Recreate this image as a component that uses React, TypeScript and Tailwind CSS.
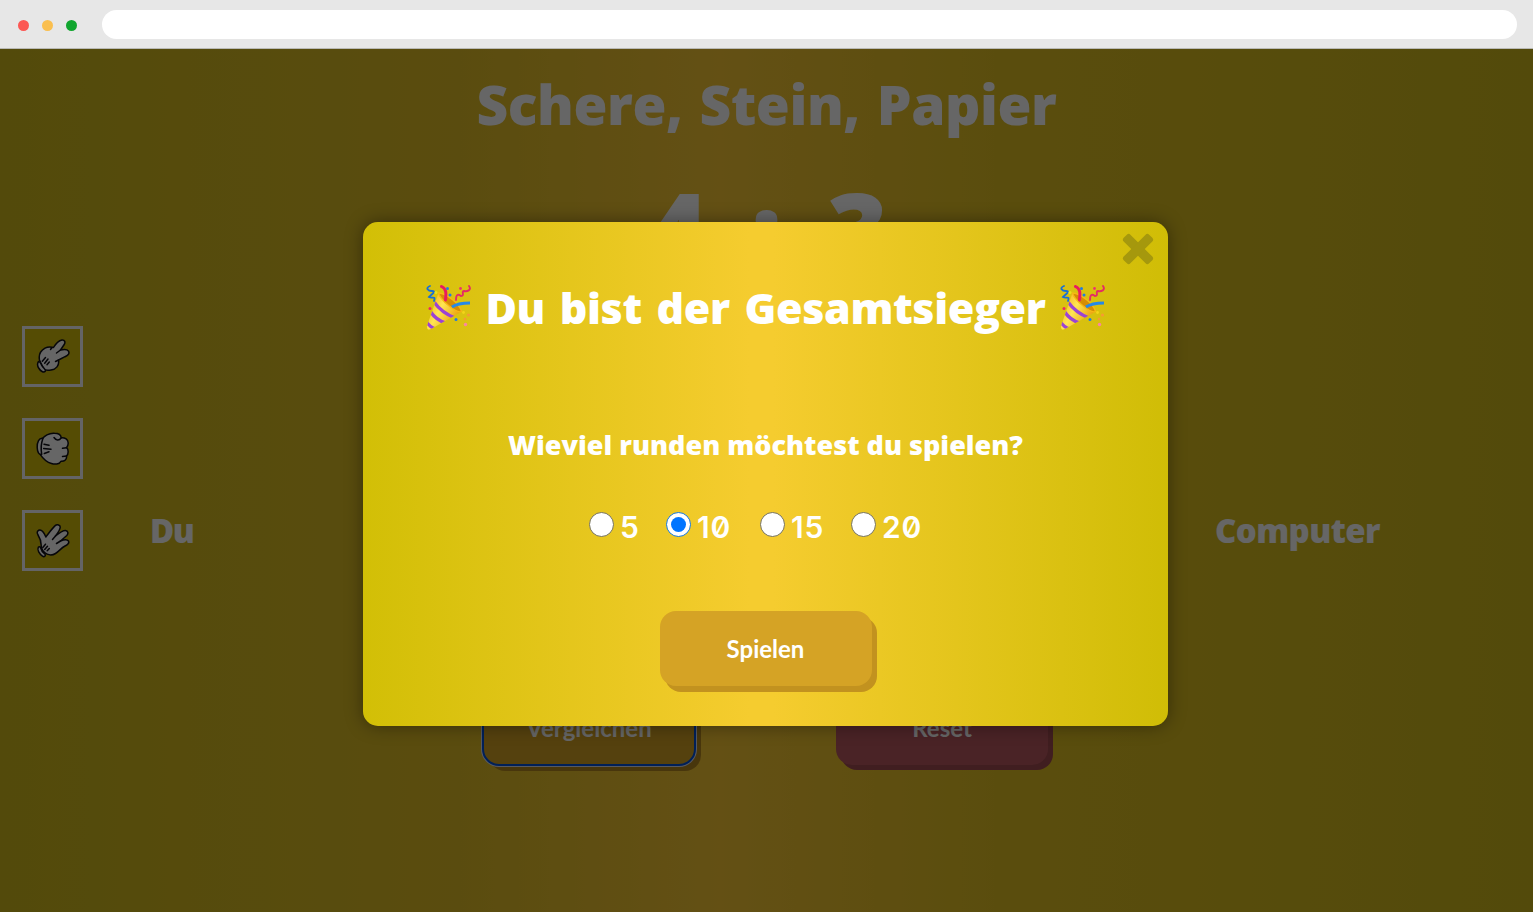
import { useState } from "react";

const heading = "font-['Open_Sans',sans-serif] font-extrabold text-white whitespace-nowrap";
const buttonText = "font-['Lato','Open_Sans',sans-serif] font-bold text-white whitespace-nowrap";

function Scissors() {
  return (
    <svg viewBox="0 0 34 34" className="size-[34px]" fill="#fff" stroke="#101018" strokeWidth="1.5" strokeLinejoin="round" strokeLinecap="round">
      <path d="M3.500 21C2.500 16 5 11.500 9 9.200C12 7.500 15 7.800 17.500 8.500C19.500 5 23 1.500 26 .900C29 .700 29.500 3.500 28.200 5.500L24.500 11C27.500 10.300 31 9.800 32.500 12.200C34 15 31.500 16.500 29 17.700L22.500 21C23.500 26.500 20 30.500 15 31C11 31.500 8.500 31 7.500 30Z" />
      <path d="M2.500 22.500C1.200 24.500 1.200 27 3 29.500C4.500 32 7.500 34 9.300 32.300C10 30.500 7.800 29.300 6.200 27C4.800 25 4.700 22.800 2.500 22.500Z" />
      <path d="M6.300 22.300L9.500 18.500M8.700 24.200L12 20M11 25.700L13.300 23M24.500 11L20.500 14M16 8.500L14.500 10.500M19.500 22.500L22.500 21" fill="none" />
    </svg>
  );
}

function Rock() {
  return (
    <svg viewBox="0 0 34 34" className="size-[34px]" fill="#fff" stroke="#101018" strokeWidth="1.5" strokeLinejoin="round" strokeLinecap="round">
      <path d="M5.500 7.500C9 3 13.500 .900 18.500 1.200C22.500 1.200 25 3.200 25.300 5.800C29 5.500 32.200 7.500 32.200 11C32.300 13 31.500 14.500 30.500 15.700C32.700 17.200 32.700 22 30.500 24C31.200 28.500 27.500 29.500 25 29.200C23.500 32.500 18.500 32.500 15.500 31.500C10.500 30 7 26.500 4.500 22.800Z" />
      <path d="M7 6.300C3 5.300 1 10.500 1.200 15.500C1.400 20 2.800 23 5.700 22.500C4.700 17 5 11.500 7 6.300Z" />
      <path d="M8 12.200L13 13.300M7.700 16.500L15 17.200M8.300 21.500L13 19.700M18 5.500C20 8.500 23 9 25.300 5.800M26.500 16.300L30.500 15.700M26.500 24.500L30.500 24" fill="none" />
    </svg>
  );
}

function Paper() {
  return (
    <svg viewBox="0 0 34 34" className="size-[34px]" fill="#fff" stroke="#101018" strokeWidth="1.500" strokeLinejoin="round" strokeLinecap="round">
      <path d="M5.200 22.500C5.500 17.500 4 14 1.800 10.500C.200 7.500 2.500 5.500 4.800 6.200C7.500 7 8.500 10 9.800 13C12.500 9.500 16 4.500 19.200 1.600C21 0 24.500 .800 24.200 3.500C24 6 21 10 19.500 12C22.500 9.500 26.500 6.200 29.500 6.400C32 6.800 32.700 9.500 30.800 11.500L24.500 17C27.500 15.800 31 15 32.500 17C33.500 19 31 21 29 22C25 24 23.500 27 19.500 29.500C14.500 32.500 7 30.500 5.200 22.500Z" />
      <path d="M2.300 23.300C.700 26 3.500 30 6.500 32.200C8.300 33.300 9.700 32 9.200 30.500C7.200 29 5 25.500 4.500 23.500C4 22.500 2.800 22.700 2.300 23.300Z" />
      <path d="M6.800 23.500L9.500 20.200M8.700 25.500L11.500 22.300M11.200 26.800L13.300 24.500M19.500 12L16.500 15.500M24.500 17L20.500 19.500" fill="none" />
    </svg>
  );
}

function PartyPopper() {
  return (
    <svg viewBox="0 0 45 45" className="size-[45px] shrink-0" fill="none" strokeLinecap="round">
      <defs>
        <linearGradient id="cone" x1="0" y1="0" x2="1" y2="0.6">
          <stop offset="0" stopColor="#f29b08" />
          <stop offset="0.48" stopColor="#ffe653" />
          <stop offset="1" stopColor="#e99b08" />
        </linearGradient>
        <clipPath id="coneClip">
          <path d="M12.500 8L1 41C.500 44 2.500 45.200 5 44L35 27C29 18 21 10 12.500 8Z" />
        </clipPath>
      </defs>
      <path d="M12.500 8L1 41C.500 44 2.500 45.200 5 44L35 27C29 18 21 10 12.500 8Z" fill="url(#cone)" />
      <g clipPath="url(#coneClip)" stroke="#9b43d4" strokeWidth="3.300">
        <path d="M8 17C13 24 19 29 29 33" />
        <path d="M4 26C8 32 12 36 20 38" />
        <path d="M0 36C3 41 6 43 10 44" />
      </g>
      <path d="M12.500 8C21 8 34 20 35.500 26.500C31 29 14 15 12.500 8Z" fill="#d68d04" stroke="#f6b716" strokeWidth="1.300" />
      <path d="M15.500 1.500C21 4 20 9 19.500 15" stroke="#e91b60" strokeWidth="3" />
      <path d="M26 22C31 18.500 37 18 44 18" stroke="#2589e8" strokeWidth="3" strokeLinecap="butt" />
      <path d="M4 1C-1 3 2 6 6 6C11 6 5 10 3 12C6 14 10 10 8 16" stroke="#176fd5" strokeWidth="1.800" />
      <path d="M43 1C46 5 41 7 38 6C35 6 39 11 35 11C32 9 30 9 30 15" stroke="#e52b65" strokeWidth="1.900" />
      <circle cx="21.500" cy="3.500" r="1.500" fill="#217be4" />
      <circle cx="34.500" cy="3.500" r="1.400" fill="#ed3470" />
      <circle cx="24" cy="10" r="1.500" fill="#217be4" />
      <circle cx="10" cy="7.500" r="1.500" fill="#e9e319" />
      <circle cx="4" cy="23.500" r="1.500" fill="#ef2664" />
      <circle cx="30" cy="34.500" r="1.500" fill="#217be4" />
      <circle cx="37.500" cy="27.500" r="1.400" fill="#f3d419" />
      <circle cx="42.500" cy="30" r="1.600" fill="#f79b33" />
      <circle cx="39" cy="34" r="1.300" fill="#f79b33" />
      <circle cx="39.500" cy="39.500" r="1.700" fill="#fa87a0" />
    </svg>
  );
}

function BrowserBar() {
  return (
    <header className="flex h-[49px] items-center border-b border-[#b9b9b5] bg-[#e7e7e7] pl-[18px] pr-4">
      <div className="flex gap-[13px] pt-[2px]">
        <i className="size-[11px] rounded-full bg-[#fc5753]" />
        <i className="size-[11px] rounded-full bg-[#fabf4f]" />
        <i className="size-[11px] rounded-full bg-[#11a62f]" />
      </div>
      <div className="ml-[25px] h-[29px] flex-1 rounded-full bg-white" />
    </header>
  );
}

const rounds = [
  { value: 5, width: "w-[77px]" },
  { value: 10, width: "w-[94px]" },
  { value: 15, width: "w-[91px]" },
  { value: 20, width: "w-[71px]" },
];

function WinnerDialog() {
  const [selected, setSelected] = useState(10);
  return (
    <section role="dialog" className="relative mt-[173px] flex h-[504px] w-[805px] -translate-x-px flex-col items-center rounded-[15px] bg-[linear-gradient(90deg,#d2bf06,#f5cc2f_48%,#f5cc2f_51%,#d0bd06)] shadow-[0_0_18px_rgba(0,0,0,0.4)]">
      <button aria-label="Schließen" className="absolute right-[14px] top-[11px] size-8">
        <svg viewBox="-16 -16 32 32" className="size-8" fill="#a5980d">
          <rect x="-18" y="-4.750" width="36" height="9.500" rx="2.500" transform="rotate(45)" />
          <rect x="-18" y="-4.750" width="36" height="9.500" rx="2.500" transform="rotate(-45)" />
        </svg>
      </button>
      <div className="mt-[56px] flex h-[58px] w-[680px] items-center justify-between">
        <PartyPopper />
        <h2 className={`${heading} pt-[2px] text-[43px] leading-[58px] tracking-[-0.4px] [word-spacing:4px]`}>Du bist der Gesamtsieger</h2>
        <PartyPopper />
      </div>
      <p className={`${heading} mt-[89px] text-[27px] leading-[40px]`}>Wieviel runden möchtest du spielen?</p>
      <div className="mt-[41px] flex h-10 w-[353px]">
        {rounds.map((round) => (
          <label key={round.value} className={`${round.width} flex shrink-0 items-center gap-[6px]`}>
            <input type="radio" name="rounds" className="sr-only" checked={selected === round.value} onChange={() => setSelected(round.value)} />
            <span className={`mb-[3px] flex size-[25px] shrink-0 items-center justify-center rounded-full border bg-white ${selected === round.value ? "border-[#1678d8]" : "border-[#77735b]"}`}>
              {selected === round.value && <i className="size-[15px] rounded-full bg-[#0075ff]" />}
            </span>
            <span className="pt-px font-['Inter',sans-serif] text-[30px] font-semibold leading-10 tracking-[0.8px] text-white slashed-zero">{round.value}</span>
          </label>
        ))}
      </div>
      <button className={`${buttonText} mt-[65px] h-[75px] w-[212px] rounded-[16px] bg-[#d5a325] text-[24px] shadow-[5px_6px_0_#c2921f]`}>Spielen</button>
    </section>
  );
}

export default function App() {
  return (
    <div className="flex h-[912px] w-full flex-col overflow-hidden">
      <BrowserBar />
      <div className="relative flex-1 overflow-hidden bg-[linear-gradient(90deg,#cfba1c,#e2bf26_30%,#f9c834_47%,#e2c122_65%,#cfba1c)]">
        <main className="flex h-full flex-col items-center pt-[25px]">
          <h1 className={`${heading} text-[55px] leading-[60px] tracking-[-0.4px] [word-spacing:3px]`}>Schere, Stein, Papier</h1>
          <div className={`${heading} mt-[45px] grid grid-cols-[60px_120px_60px] text-center text-[106px] leading-[100px]`}>
            <span>4</span><span>:</span><span>3</span>
          </div>
          <div className="mt-[47px] flex h-[245px] w-full justify-between pl-[22px] pr-[153px]">
            <div className="flex">
              <div className="flex flex-col gap-[31.500px]">
                {[Scissors, Rock, Paper].map((Icon, index) => (
                  <button key={index} className="flex size-[61px] items-center justify-center border-[3px] border-[#fafaff] bg-[#d4bd0c]"><Icon /></button>
                ))}
              </div>
              <h3 className={`${heading} ml-[67px] mt-[185px] text-[33px] leading-10 tracking-[-1.500px]`}>Du</h3>
            </div>
            <h3 className={`${heading} mt-[185px] text-[33px] leading-10 tracking-[-0.6px]`}>Computer</h3>
          </div>
          <div className="mt-[119px] flex w-full gap-[141px] pl-[483px]">
            <button className={`${buttonText} h-[75px] w-[212px] rounded-[16px] bg-[#d5a325] text-[24px] shadow-[0_0_0_2px_#d8dff5,6px_6px_0_#b58820] outline-2 -outline-offset-1 outline-[#0050db]`}>Vergleichen</button>
            <button className={`${buttonText} h-[75px] w-[212px] rounded-[16px] bg-[#b85960] text-[24px] shadow-[5px_5px_0_#a14b50]`}>Reset</button>
          </div>
        </main>
        <div className="absolute inset-0 flex justify-center bg-black/60">
          <WinnerDialog />
        </div>
      </div>
    </div>
  );
}
